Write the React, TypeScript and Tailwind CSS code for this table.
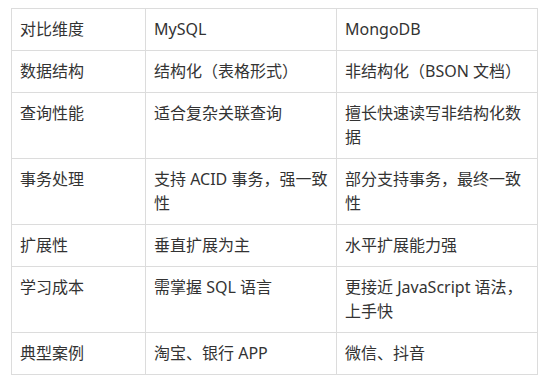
const rows: [string, string, string][] = [
  ['对比维度', 'MySQL', 'MongoDB'],
  ['数据结构', '结构化（表格形式）', '非结构化（BSON 文档）'],
  ['查询性能', '适合复杂关联查询', '擅长快速读写非结构化数据'],
  ['事务处理', '支持 ACID 事务，强一致性', '部分支持事务，最终一致性'],
  ['扩展性', '垂直扩展为主', '水平扩展能力强'],
  ['学习成本', '需掌握 SQL 语言', '更接近 JavaScript 语法，上手快'],
  ['典型案例', '淘宝、银行 APP', '微信、抖音'],
]

export default function App() {
  return (
    <div className="min-h-screen bg-white pl-[11px] pt-[8px] font-['Noto_Sans','Noto_Sans_CJK_SC',sans-serif] text-[#333]">
      <table className="w-[526px] table-fixed border-collapse text-[16px] leading-[24px]">
        <colgroup>
          <col className="w-[134px]" />
          <col className="w-[191px]" />
          <col className="w-[201px]" />
        </colgroup>
        <tbody>
          {rows.map((r) => (
            <tr key={r[0]}>
              {r.map((c, i) => (
                <td
                  key={i}
                  className="border border-[#dcdcdc] px-[8px] pt-[8px] pb-[9px] align-top"
                >
                  {c}
                </td>
              ))}
            </tr>
          ))}
        </tbody>
      </table>
    </div>
  )
}
